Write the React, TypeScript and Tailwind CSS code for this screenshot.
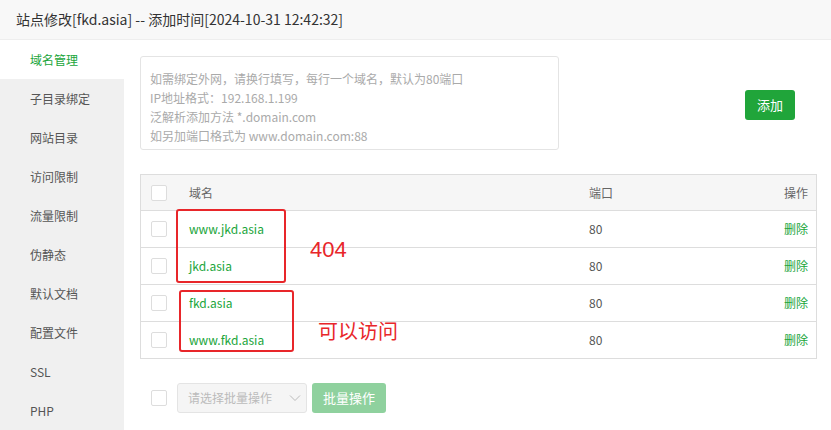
import React from 'react';

const FONT = '"Microsoft YaHei", "Noto Sans CJK SC", "Liberation Sans", sans-serif';

const menu = ['域名管理', '子目录绑定', '网站目录', '访问限制', '流量限制', '伪静态', '默认文档', '配置文件', 'SSL', 'PHP'];

const domains = ['www.jkd.asia', 'jkd.asia', 'fkd.asia', 'www.fkd.asia'];

function Checkbox() {
  return <span className="block w-4 h-4 border border-[#ddd] rounded-[2px] bg-white" />;
}

export default function App() {
  return (
    <div className="w-[831px] h-[430px] overflow-hidden bg-white text-[#333]" style={{ fontFamily: FONT }}>
      {/* Title bar */}
      <div className="h-10 bg-[#f8f8f8] border-b border-[#eee] flex items-center pl-4 text-[14px] text-[#333]">
        站点修改[fkd.asia] -- 添加时间[2024-10-31 12:42:32]
      </div>

      <div className="flex h-[390px]">
        {/* Sidebar */}
        <div className="w-[124px] shrink-0 bg-[#f0f0f0] flex flex-col">
          {menu.map((m, i) => (
            <div
              key={m}
              className={
                i === 0
                  ? 'h-[39px] flex items-center pl-[30px] text-[12px] bg-white text-[#20a53a]'
                  : 'h-[39px] flex items-center pl-[30px] text-[12px] text-[#555]'
              }
            >
              {m}
            </div>
          ))}
        </div>

        {/* Content */}
        <div className="flex-1 pl-4 pr-[14px] pt-4 relative">
          <div className="flex items-start">
            <div className="w-[419px] h-[94px] border border-[#e4e4e4] rounded-[3px] px-[9px] pt-[12px] text-[12px] leading-[19px] text-[#aaa]">
              <div>如需绑定外网，请换行填写，每行一个域名，默认为80端口</div>
              <div>IP地址格式：192.168.1.199</div>
              <div>泛解析添加方法 *.domain.com</div>
              <div>如另加端口格式为 www.domain.com:88</div>
            </div>
            <button className="ml-auto mr-[22px] mt-[34px] w-[50px] h-[30px] rounded-[3px] bg-[#20a53a] text-white text-[13px]">
              添加
            </button>
          </div>

          {/* Table */}
          <div className="mt-[24px] border border-[#ddd] text-[12px]">
            <div className="h-[36px] bg-[#f6f6f6] flex items-center border-b border-[#ddd] text-[#666]">
              <div className="w-[48px] pl-[10px]"><Checkbox /></div>
              <div className="w-[400px]">域名</div>
              <div className="flex-1">端口</div>
              <div className="pr-[8px]">操作</div>
            </div>
            {domains.map((d, i) => (
              <div
                key={d}
                className={i < domains.length - 1 ? 'h-[37px] flex items-center border-b border-[#ddd]' : 'h-[36px] flex items-center'}
              >
                <div className="w-[48px] pl-[10px]"><Checkbox /></div>
                <div className="w-[400px] text-[#20a53a]">{d}</div>
                <div className="flex-1 text-[#555]">80</div>
                <div className="pr-[8px] text-[#20a53a]">删除</div>
              </div>
            ))}
          </div>

          {/* Batch */}
          <div className="mt-[24px] flex items-center">
            <div className="pl-[11px] w-[37px]"><Checkbox /></div>
            <div className="w-[130px] h-[30px] border border-[#e4e4e4] rounded-[3px] bg-[#f5f5f5] flex items-center pl-[10px] text-[12px] text-[#bbb]">
              <span className="flex-1">请选择批量操作</span>
              <svg width="12" height="8" viewBox="0 0 12 8" className="mr-[5px]">
                <path d="M1 1.5 L6 6.5 L11 1.5" fill="none" stroke="#bbb" strokeWidth="1" />
              </svg>
            </div>
            <button className="ml-[5px] w-[74px] h-[30px] rounded-[3px] bg-[#8fd19e] text-white text-[13px]">批量操作</button>
          </div>

          {/* Annotations */}
          <div className="absolute left-[52px] top-[169px] w-[110px] h-[74px] border-2 border-[#e8262a] rounded-[3px]" />
          <div className="absolute left-[186px] top-[199px] text-[22px] leading-none text-[#e8262a]" style={{ fontFamily: '"Liberation Sans", sans-serif' }}>404</div>
          <div className="absolute left-[55px] top-[250px] w-[115px] h-[62px] border-2 border-[#e8262a] rounded-[3px]" />
          <div className="absolute left-[194px] top-[281px] text-[20px] leading-none text-[#e8262a]">可以访问</div>
        </div>
      </div>
    </div>
  );
}
